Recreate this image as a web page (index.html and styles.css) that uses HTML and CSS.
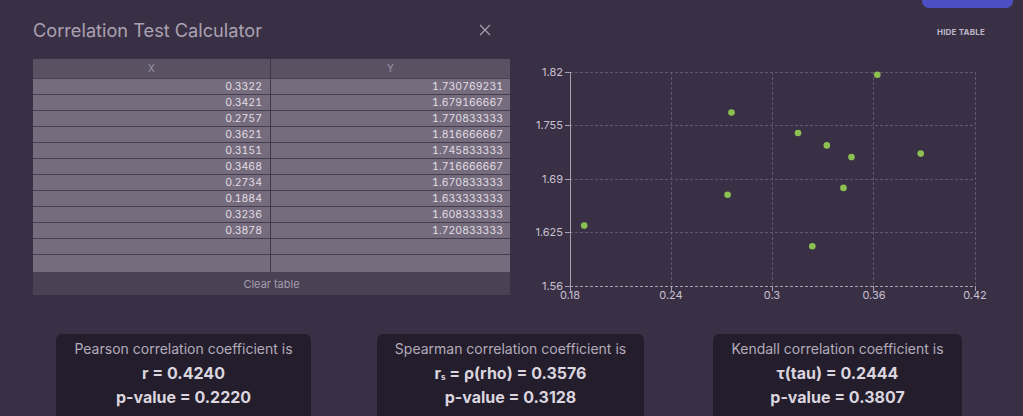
FILE: index.html
```html
<!DOCTYPE html>
<html>
<head>
<meta charset="utf-8">
<title>Correlation Test Calculator</title>
<link rel="stylesheet" href="styles.css">
</head>
<body>
<div class="top-button"></div>
<div class="page">
  <div class="left">
    <div class="head">
      <h1 class="title">Correlation Test Calculator</h1>
      <button class="close" aria-label="Close">
        <svg width="12" height="12" viewBox="0 0 12 12"><path d="M1 1 L11 11 M11 1 L1 11" stroke="#a89fb1" stroke-width="1.2" fill="none"/></svg>
      </button>
    </div>
    <div class="table">
      <div class="row hdr"><div class="cell">X</div><div class="cell">Y</div></div>
      <div class="row"><div class="cell">0.3322</div><div class="cell">1.730769231</div></div>
      <div class="row"><div class="cell">0.3421</div><div class="cell">1.679166667</div></div>
      <div class="row"><div class="cell">0.2757</div><div class="cell">1.770833333</div></div>
      <div class="row"><div class="cell">0.3621</div><div class="cell">1.816666667</div></div>
      <div class="row"><div class="cell">0.3151</div><div class="cell">1.745833333</div></div>
      <div class="row"><div class="cell">0.3468</div><div class="cell">1.716666667</div></div>
      <div class="row"><div class="cell">0.2734</div><div class="cell">1.670833333</div></div>
      <div class="row"><div class="cell">0.1884</div><div class="cell">1.633333333</div></div>
      <div class="row"><div class="cell">0.3236</div><div class="cell">1.608333333</div></div>
      <div class="row"><div class="cell">0.3878</div><div class="cell">1.720833333</div></div>
      <div class="row"><div class="cell"></div><div class="cell"></div></div>
      <div class="row last"><div class="cell"></div><div class="cell"></div></div>
      <div class="clear">Clear table</div>
    </div>
  </div>
  <div class="right">
    <div class="hide-row"><span class="hide">HIDE TABLE</span></div>
    <svg class="chart" width="455" height="250" viewBox="0 0 455 250">
      <g stroke="#62586d" stroke-width="1" stroke-dasharray="3 2" fill="none">
        <line x1="40" y1="17.5" x2="445" y2="17.5"/>
        <line x1="40" y1="70.5" x2="445" y2="70.5"/>
        <line x1="40" y1="124.5" x2="445" y2="124.5"/>
        <line x1="40" y1="177.5" x2="445" y2="177.5"/>
        <line x1="141.5" y1="17" x2="141.5" y2="231"/>
        <line x1="242.5" y1="17" x2="242.5" y2="231"/>
        <line x1="343.5" y1="17" x2="343.5" y2="231"/>
        <line x1="445.5" y1="17" x2="445.5" y2="231"/>
      </g>
      <g stroke="#a9a0b3" stroke-width="1" fill="none">
        <line x1="40.5" y1="17" x2="40.5" y2="231"/>
        <line x1="40" y1="231.5" x2="445" y2="231.5" stroke-dasharray="3 2"/>
        <line x1="35" y1="17.5" x2="40" y2="17.5"/>
        <line x1="35" y1="70.5" x2="40" y2="70.5"/>
        <line x1="35" y1="124.5" x2="40" y2="124.5"/>
        <line x1="35" y1="177.5" x2="40" y2="177.5"/>
        <line x1="35" y1="231.5" x2="40" y2="231.5"/>
        <line x1="40.5" y1="231" x2="40.5" y2="236"/>
        <line x1="141.5" y1="231" x2="141.5" y2="236"/>
        <line x1="242.5" y1="231" x2="242.5" y2="236"/>
        <line x1="343.5" y1="231" x2="343.5" y2="236"/>
        <line x1="445.5" y1="231" x2="445.5" y2="236"/>
      </g>
      <g class="ylab" text-anchor="end">
        <text x="33" y="21">1.82</text>
        <text x="33" y="74">1.755</text>
        <text x="33" y="128">1.69</text>
        <text x="33" y="181">1.625</text>
        <text x="33" y="235">1.56</text>
      </g>
      <g class="xlab" text-anchor="middle">
        <text x="40" y="244">0.18</text>
        <text x="141" y="244">0.24</text>
        <text x="242" y="244">0.3</text>
        <text x="344" y="244">0.36</text>
        <text x="445" y="244">0.42</text>
      </g>
      <g fill="#8cc152">
        <circle cx="296.8" cy="90.4" r="3.3"/>
        <circle cx="313.5" cy="132.9" r="3.3"/>
        <circle cx="201.5" cy="57.5" r="3.3"/>
        <circle cx="347.3" cy="19.7" r="3.3"/>
        <circle cx="268.0" cy="78.0" r="3.3"/>
        <circle cx="321.5" cy="102.1" r="3.3"/>
        <circle cx="197.6" cy="139.8" r="3.3"/>
        <circle cx="54.2" cy="170.6" r="3.3"/>
        <circle cx="282.3" cy="191.2" r="3.3"/>
        <circle cx="390.7" cy="98.6" r="3.3"/>
      </g>
    </svg>
  </div>
</div>
<div class="results">
  <div class="col">
    <div class="card">
      <div class="cap">Pearson correlation coefficient is</div>
      <div class="val">r = 0.4240</div>
      <div class="val">p-value = 0.2220</div>
    </div>
  </div>
  <div class="col">
    <div class="card">
      <div class="cap">Spearman correlation coefficient is</div>
      <div class="val">r<sub>s</sub> = ρ(rho) = 0.3576</div>
      <div class="val">p-value = 0.3128</div>
    </div>
  </div>
  <div class="col">
    <div class="card">
      <div class="cap">Kendall correlation coefficient is</div>
      <div class="val">τ(tau) = 0.2444</div>
      <div class="val">p-value = 0.3807</div>
    </div>
  </div>
</div>
</body>
</html>
```
FILE: styles.css
```css
html, body {
  margin: 0;
  padding: 0;
}
body {
  background: #3a3045;
  font-family: Inter, Roboto, "Liberation Sans", sans-serif;
  color: #ddd8e2;
  width: 1023px;
  height: 416px;
  overflow: hidden;
  position: relative;
}
.top-button {
  position: absolute;
  top: -12px;
  left: 922px;
  width: 91px;
  height: 20px;
  border-radius: 7px;
  background: #4b4fc2;
}
.page {
  display: flex;
  gap: 20px;
  padding: 18px 38px 0 33px;
}
.left {
  width: 477px;
  flex: none;
}
.head {
  display: flex;
  align-items: center;
  justify-content: space-between;
  height: 24px;
  padding-right: 19px;
}
.title {
  margin: 0;
  font-size: 18.2px;
  font-weight: 400;
  color: #aaa2b2;
  line-height: 24px;
}
.close {
  border: 0;
  background: none;
  padding: 0;
  width: 12px;
  height: 12px;
  display: flex;
}
.table {
  margin-top: 17px;
  font-size: 10.5px;
  font-variant-numeric: tabular-nums;
}
.row {
  display: grid;
  grid-template-columns: 238px 1fr;
  height: 16px;
  background: #756c7d;
  box-sizing: border-box;
  border-bottom: 1px solid #463e50;
}
.row .cell {
  text-align: right;
  padding-right: 8px;
  line-height: 15px;
  color: #e2dee6;
  border-right: 1px solid #3f3749;
}
.row .cell:last-child {
  border-right: 0;
  padding-right: 7px;
}
.row.hdr {
  height: 20px;
  background: #5a5163;
  border-bottom: 1px solid #4a4254;
}
.row.hdr .cell {
  text-align: center;
  padding-right: 0;
  line-height: 19px;
  font-size: 10px;
  color: #9d95a6;
}
.row.last {
  border-bottom: 0;
  height: 17px;
}
.clear {
  height: 23px;
  line-height: 25px;
  text-align: center;
  background: #4a4154;
  color: #a69eae;
  font-size: 11px;
}
.right {
  flex: 1;
  min-width: 0;
}
.hide-row {
  display: flex;
  justify-content: flex-end;
  height: 24px;
  padding-top: 2px;
}
.hide {
  font-size: 8px;
  font-weight: 700;
  line-height: 24px;
  color: #beb6c6;
  letter-spacing: 0.2px;
}
.chart {
  display: block;
  margin-top: 11px;
  overflow: visible;
}
.ylab text, .xlab text {
  font-family: Inter, Roboto, "Liberation Sans", sans-serif;
  font-size: 11px;
  fill: #c9c1d1;
}
.results {
  display: grid;
  grid-template-columns: repeat(3, 1fr);
  padding: 0 22px 0 20px;
  margin-top: 29px;
}
.col {
  display: flex;
  justify-content: center;
}
.card {
  background: #241e2c;
  border-radius: 6px;
  padding: 7px 18px 12px;
  text-align: center;
}
.cap {
  font-size: 14px;
  line-height: 16px;
  color: #b3abbb;
  margin-bottom: 4px;
}
.val {
  font-size: 16px;
  font-weight: 700;
  line-height: 24px;
  color: #dad5df;
}
.val sub {
  font-size: 8px;
  vertical-align: -1px;
  line-height: 0;
}
```
